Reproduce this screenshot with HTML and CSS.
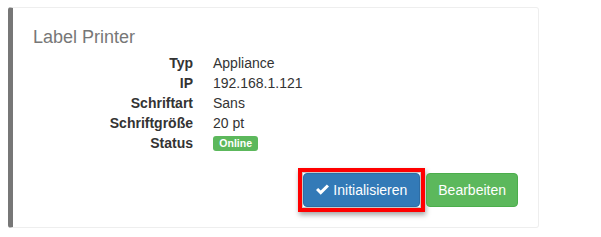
FILE: index.html
```html
<!DOCTYPE html>
<html>
<head>
<meta charset="utf-8">
<link rel="stylesheet" href="styles.css">
</head>
<body>
<div class="callout">
  <h4 class="title">Label Printer</h4>
  <dl class="props">
    <dt>Typ</dt><dd>Appliance</dd>
    <dt>IP</dt><dd>192.168.1.121</dd>
    <dt>Schriftart</dt><dd>Sans</dd>
    <dt>Schriftgröße</dt><dd>20 pt</dd>
    <dt>Status</dt><dd><span class="label">Online</span></dd>
  </dl>
  <div class="actions">
    <button class="btn btn-primary focused"><svg class="icon" viewBox="0 0 14 14" width="13" height="13"><polygon points="0,7.6 2.3,5.3 5.1,8.1 11.7,1.5 14,3.8 5.1,12.7" fill="#fff"/></svg>Initialisieren</button>
    <button class="btn btn-success">Bearbeiten</button>
  </div>
</div>
</body>
</html>
```
FILE: styles.css
```css
html, body {
  margin: 0;
  padding: 0;
  background: #fff;
}
body {
  padding: 7px 8px;
  font-family: "Liberation Sans", Arial, sans-serif;
  font-size: 14px;
  line-height: 20px;
  color: #333;
}
.callout {
  width: 531px;
  box-sizing: border-box;
  padding: 20px;
  border: 1px solid #eee;
  border-left: 5px solid #777;
  border-radius: 3px;
}
.title {
  margin: 0 0 5px;
  font-size: 18px;
  font-weight: 500;
  line-height: 19.8px;
  color: #777;
}
.props {
  display: grid;
  grid-template-columns: 160px 1fr;
  column-gap: 20px;
  margin: 0 0 20px;
}
.props dt {
  font-weight: bold;
  text-align: right;
}
.props dd {
  margin: 0;
}
.label {
  display: inline-block;
  background: #5cb85c;
  color: #fff;
  font-size: 10.5px;
  font-weight: bold;
  line-height: 1;
  padding: 2.1px 6.3px 3.15px;
  border-radius: 3px;
  vertical-align: 1px;
}
.actions {
  display: flex;
  justify-content: flex-end;
  gap: 6px;
}
.btn {
  position: relative;
  font-family: inherit;
  font-size: 14px;
  line-height: 20px;
  padding: 6px 12px;
  border: 1px solid transparent;
  border-radius: 4px;
  color: #fff;
  display: inline-flex;
  align-items: center;
}
.btn-primary {
  background: #337ab7;
  border-color: #2e6da4;
}
.btn-success {
  background: #5cb85c;
  border-color: #4cae4c;
  padding: 6px 11px;
}
.icon {
  margin-right: 4px;
}
.focused::after {
  content: "";
  position: absolute;
  top: -6px;
  left: -6px;
  right: -6px;
  bottom: -6px;
  border: 4px solid #f00;
  box-shadow: inset 0 0 0 1px #c8c8c8, 1px 3px 5px rgba(0,0,0,0.35);
  pointer-events: none;
}
```
